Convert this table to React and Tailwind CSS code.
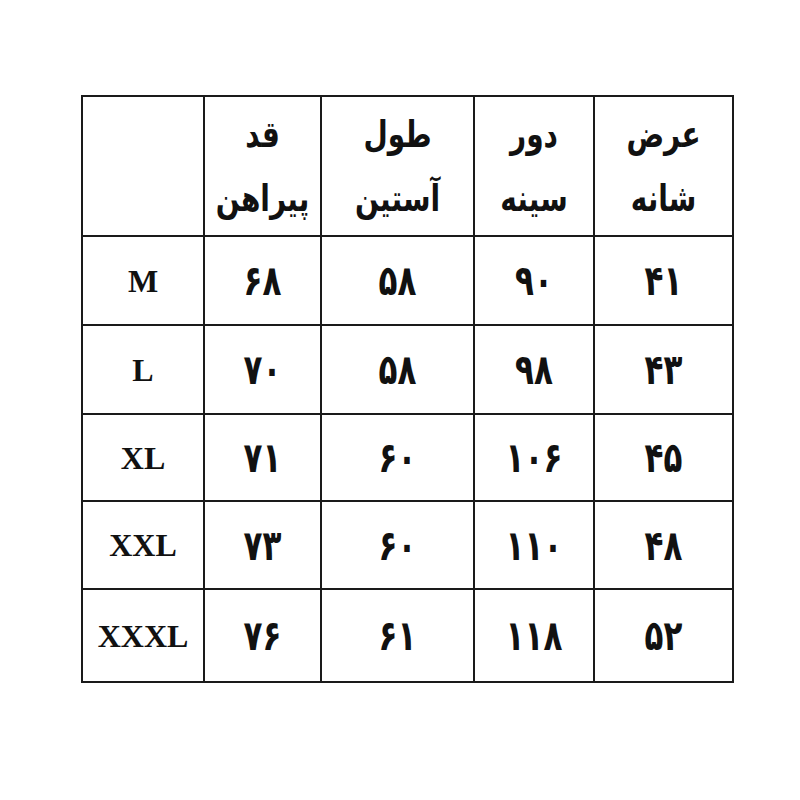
const headers = [
  ['قد', 'پیراهن'],
  ['طول', 'آستین'],
  ['دور', 'سینه'],
  ['عرض', 'شانه'],
];

const rows = [
  { size: 'M', h: 'h-[89px]', vals: ['۶۸', '۵۸', '۹۰', '۴۱'] },
  { size: 'L', h: 'h-[89px]', vals: ['۷۰', '۵۸', '۹۸', '۴۳'] },
  { size: 'XL', h: 'h-[87px]', vals: ['۷۱', '۶۰', '۱۰۶', '۴۵'] },
  { size: 'XXL', h: 'h-[88px]', vals: ['۷۳', '۶۰', '۱۱۰', '۴۸'] },
  { size: 'XXXL', h: 'h-[93px]', vals: ['۷۶', '۶۱', '۱۱۸', '۵۲'] },
];

const cell = 'border-2 border-[#1a1a1a] text-center align-middle p-0';
const fa = "font-['DejaVu_Sans',sans-serif] font-bold text-[#111]";

export default function App() {
  return (
    <div className="w-[800px] h-[800px] bg-white pt-[95px] pl-[81px]">
      <table className="border-collapse table-fixed w-[651px]">
        <colgroup>
          <col className="w-[122px]" />
          <col className="w-[117px]" />
          <col className="w-[153px]" />
          <col className="w-[120px]" />
          <col className="w-[139px]" />
        </colgroup>
        <thead>
          <tr className="h-[140px]">
            <th className={cell}></th>
            {headers.map(([a, b], i) => (
              <th key={i} className={cell}>
                <div dir="rtl" className={`${fa} text-[28px] leading-[64px] pt-[2px]`}>
                  <div className="scale-y-[1.3]">{a}</div>
                  <div className="scale-y-[1.3]">{b}</div>
                </div>
              </th>
            ))}
          </tr>
        </thead>
        <tbody>
          {rows.map((r) => (
            <tr key={r.size} className={r.h}>
              <td className={`${cell} font-['Liberation_Serif',serif] font-bold text-[32px] text-[#111]`}>
                {r.size}
              </td>
              {r.vals.map((v, i) => (
                <td key={i} dir="rtl" className={`${cell} ${fa} text-[31px]`}>
                  <span className="inline-block scale-y-[1.35] tracking-[-2px]">{v}</span>
                </td>
              ))}
            </tr>
          ))}
        </tbody>
      </table>
    </div>
  );
}
